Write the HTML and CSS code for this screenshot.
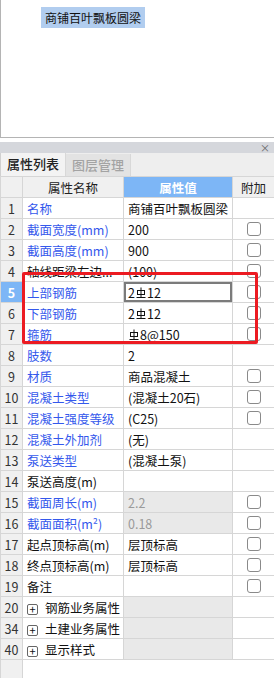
FILE: index.html
```html
<!DOCTYPE html>
<html lang="zh">
<head>
<meta charset="utf-8">
<link rel="stylesheet" href="styles.css">
</head>
<body>
<div class="canvas">
  <span class="label">商铺百叶飘板圆梁</span>
</div>
<div class="gap"></div>
<div class="panel">
  <div class="titlebar"><span class="close">×</span></div>
  <div class="tabs">
    <span class="tab active">属性列表</span>
    <span class="tab">图层管理</span>
  </div>
  <div class="grid-wrap">
    <table class="grid">
      <colgroup><col class="c-num"><col class="c-name"><col class="c-val"><col class="c-add"></colgroup>
      <thead>
        <tr><th class="num"></th><th>属性名称</th><th class="hv">属性值</th><th>附加</th></tr>
      </thead>
      <tbody>
        <tr><td class="num">1</td><td class="nm b">名称</td><td class="v">商铺百叶飘板圆梁</td><td></td></tr>
        <tr><td class="num">2</td><td class="nm b">截面宽度(mm)</td><td class="v">200</td><td><i class="cb"></i></td></tr>
        <tr><td class="num">3</td><td class="nm b">截面高度(mm)</td><td class="v">900</td><td><i class="cb"></i></td></tr>
        <tr><td class="num">4</td><td class="nm k">轴线距梁左边...</td><td class="v">(100)</td><td><i class="cb"></i></td></tr>
        <tr><td class="num sel">5</td><td class="nm b">上部钢筋</td><td class="v edit">2<svg class="rb" viewBox="0 0 10 12"><rect x="1.5" y="3.5" width="7" height="4" fill="none" stroke="#111" stroke-width="1"/><line x1="5" y1="0.5" x2="5" y2="10.5" stroke="#111" stroke-width="1"/><line x1="0.5" y1="10.5" x2="9.5" y2="10.5" stroke="#111" stroke-width="1"/></svg>12</td><td><i class="cb"></i></td></tr>
        <tr><td class="num">6</td><td class="nm b">下部钢筋</td><td class="v">2<svg class="rb" viewBox="0 0 10 12"><rect x="1.5" y="3.5" width="7" height="4" fill="none" stroke="#111" stroke-width="1"/><line x1="5" y1="0.5" x2="5" y2="10.5" stroke="#111" stroke-width="1"/><line x1="0.5" y1="10.5" x2="9.5" y2="10.5" stroke="#111" stroke-width="1"/></svg>12</td><td><i class="cb"></i></td></tr>
        <tr><td class="num">7</td><td class="nm b">箍筋</td><td class="v"><svg class="rb" viewBox="0 0 10 12"><rect x="1.5" y="3.5" width="7" height="4" fill="none" stroke="#111" stroke-width="1"/><line x1="5" y1="0.5" x2="5" y2="10.5" stroke="#111" stroke-width="1"/><line x1="0.5" y1="10.5" x2="9.5" y2="10.5" stroke="#111" stroke-width="1"/></svg>8@150</td><td><i class="cb"></i></td></tr>
        <tr><td class="num">8</td><td class="nm b">肢数</td><td class="v">2</td><td></td></tr>
        <tr><td class="num">9</td><td class="nm b">材质</td><td class="v">商品混凝土</td><td><i class="cb"></i></td></tr>
        <tr><td class="num">10</td><td class="nm b">混凝土类型</td><td class="v">(混凝土20石)</td><td><i class="cb"></i></td></tr>
        <tr><td class="num">11</td><td class="nm b">混凝土强度等级</td><td class="v">(C25)</td><td><i class="cb"></i></td></tr>
        <tr><td class="num">12</td><td class="nm b">混凝土外加剂</td><td class="v">(无)</td><td></td></tr>
        <tr><td class="num">13</td><td class="nm b">泵送类型</td><td class="v">(混凝土泵)</td><td></td></tr>
        <tr><td class="num">14</td><td class="nm k">泵送高度(m)</td><td class="v"></td><td></td></tr>
        <tr><td class="num">15</td><td class="nm b">截面周长(m)</td><td class="v ro">2.2</td><td><i class="cb"></i></td></tr>
        <tr><td class="num">16</td><td class="nm b">截面面积(m²)</td><td class="v ro">0.18</td><td><i class="cb"></i></td></tr>
        <tr><td class="num">17</td><td class="nm k">起点顶标高(m)</td><td class="v">层顶标高</td><td><i class="cb"></i></td></tr>
        <tr><td class="num">18</td><td class="nm k">终点顶标高(m)</td><td class="v">层顶标高</td><td><i class="cb"></i></td></tr>
        <tr><td class="num">19</td><td class="nm k">备注</td><td class="v"></td><td><i class="cb"></i></td></tr>
        <tr><td class="num">20</td><td class="nm k"><i class="plus">+</i>钢筋业务属性</td><td class="v ro"></td><td></td></tr>
        <tr><td class="num">34</td><td class="nm k"><i class="plus">+</i>土建业务属性</td><td class="v ro"></td><td></td></tr>
        <tr><td class="num">40</td><td class="nm k"><i class="plus">+</i>显示样式</td><td class="v ro"></td><td></td></tr>
      </tbody>
    </table>
    <div class="filler"><div class="filler-num"></div></div>
    <div class="redbox"></div>
  </div>
</div>
</body>
</html>
```

FILE: styles.css
```css
* { box-sizing: border-box; }
html, body { margin: 0; padding: 0; background: #fff; }
body {
  width: 274px;
  height: 678px;
  overflow: hidden;
  font-family: "Noto Sans CJK SC", "Microsoft YaHei", sans-serif;
  font-size: 12px;
  color: #111;
}
.canvas {
  height: 138px;
  border-left: 1px solid #b4b4b4;
  border-bottom: 1px solid #b4b4b4;
  padding: 7px 0 0 40px;
}
.label {
  display: inline-block;
  height: 21px;
  line-height: 21px;
  padding: 0 4px;
  background: #b1cdef;
  font-size: 12px;
  color: #111;
}
.gap { height: 4px; }
.panel { position: relative; }
.titlebar {
  height: 11px;
  background: #d5d7dc;
  display: flex;
  justify-content: flex-end;
  align-items: center;
  padding-right: 4px;
}
.close { font-size: 10px; line-height: 10px; color: #666; }
.tabs {
  height: 23px;
  background: #eeeeee;
  display: flex;
  align-items: flex-end;
  border-left: 1px solid #d0d0d0;
}
.tab {
  height: 22px;
  line-height: 22px;
  padding: 0 6px;
  font-size: 13px;
  color: #a3a3a3;
  background: #e3e3e3;
  border-right: 1px solid #d8d8d8;
  font-weight: 500;
}
.tab.active {
  background: #f3f3f3;
  color: #222;
  height: 23px;
}
.grid-wrap { position: relative; }
.grid {
  border-collapse: collapse;
  table-layout: fixed;
  width: 274px;
}
.c-num { width: 22px; }
.c-name { width: 101px; }
.c-val { width: 109px; }
.c-add { width: 42px; }
.grid th, .grid td {
  border: 1px solid #d6d6d6;
  height: 21px;
  padding: 0;
  white-space: nowrap;
  overflow: hidden;
  font-size: 12.5px;
  line-height: 19px;
}
.grid th {
  background: #f0f0f0;
  font-weight: normal;
  color: #222;
  text-align: center;
}
.grid th.hv { background: #7db6f6; color: #fff; font-weight: bold; }
.grid td.num {
  background: #f0f0f0;
  text-align: center;
  color: #333;
}
.grid td.num.sel { background: #7db6f6; color: #fff; font-weight: bold; }
.nm { padding-left: 4px !important; text-overflow: clip; }
.nm.b { color: #3458ec; }
.nm.k { color: #111; }
.v { padding-left: 4px !important; color: #111; }
.v.ro { background: #e9e9e9; color: #9a9a9a; }
.v.edit { box-shadow: inset 0 0 0 2px #7b7b7b; }
.rb { width: 10px; height: 12px; vertical-align: -1px; margin: 0 1px; }
.cb {
  display: block;
  width: 14px;
  height: 14px;
  margin: 0 auto;
  border: 1px solid #8a8a8a;
  border-radius: 3px;
  background: #fff;
}
.plus {
  display: inline-block;
  width: 11px;
  height: 11px;
  border: 1px solid #666;
  border-radius: 2px;
  font-style: normal;
  font-size: 11px;
  line-height: 8px;
  text-align: center;
  margin-right: 7px;
  vertical-align: -1px;
}
.filler { height: 40px; }
.filler-num {
  width: 23px;
  height: 100%;
  background: #f0f0f0;
  border-left: 1px solid #d6d6d6;
  border-right: 1px solid #d6d6d6;
}
.redbox {
  position: absolute;
  left: 22px;
  top: 96px;
  width: 236px;
  height: 72px;
  border: 3px solid #ec1b22;
  border-radius: 2px;
  pointer-events: none;
}
```
